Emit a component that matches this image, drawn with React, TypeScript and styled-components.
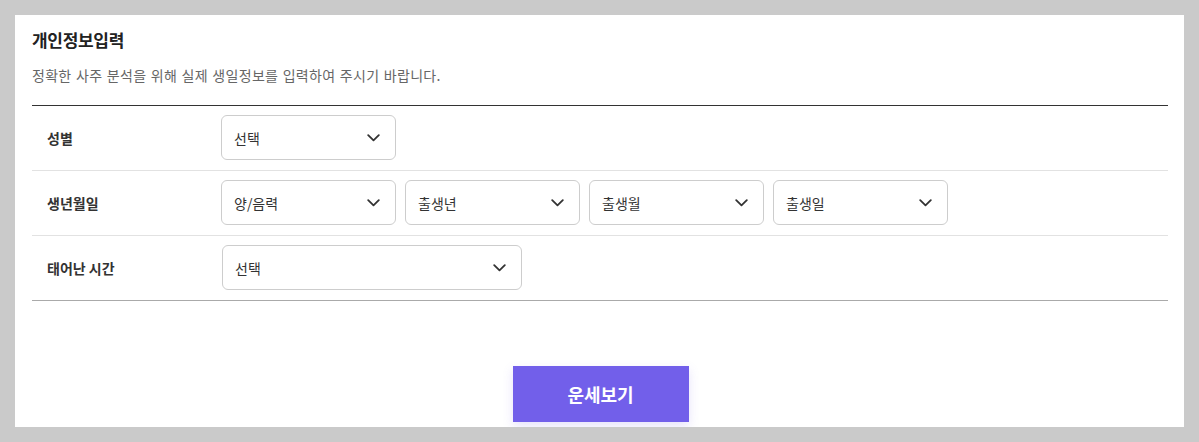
import React from 'react'
import styled, { createGlobalStyle } from 'styled-components'

const GlobalStyle = createGlobalStyle`
  html, body {
    margin: 0;
    padding: 0;
    background: #cacaca;
    font-family: "Noto Sans CJK KR", "Noto Sans", sans-serif;
  }
  * { box-sizing: border-box; }
`

type Field = { placeholder: string; wide?: boolean }
type Row = { label: string; fields: Field[] }

const rows: Row[] = [
  { label: '성별', fields: [{ placeholder: '선택' }] },
  {
    label: '생년월일',
    fields: [
      { placeholder: '양/음력' },
      { placeholder: '출생년' },
      { placeholder: '출생월' },
      { placeholder: '출생일' },
    ],
  },
  { label: '태어난 시간', fields: [{ placeholder: '선택', wide: true }] },
]

const Chevron = () => (
  <svg width="13" height="8" viewBox="0 0 13 8" fill="none">
    <path d="M1.2 1.2L6.5 6.4L11.8 1.2" stroke="#333" strokeWidth="1.8" strokeLinecap="round" strokeLinejoin="round" />
  </svg>
)

const App = () => (
  <>
    <GlobalStyle />
    <Card>
      <Title>개인정보입력</Title>
      <Desc>정확한 사주 분석을 위해 실제 생일정보를 입력하여 주시기 바랍니다.</Desc>
      <Table>
        {rows.map((row) => (
          <FormRow key={row.label}>
            <Label>{row.label}</Label>
            <Fields>
              {row.fields.map((f, i) => (
                <Select key={i} $wide={f.wide}>
                  <span>{f.placeholder}</span>
                  <Chevron />
                </Select>
              ))}
            </Fields>
          </FormRow>
        ))}
      </Table>
      <Actions>
        <SubmitBtn>운세보기</SubmitBtn>
      </Actions>
    </Card>
  </>
)

const Card = styled.div`
  margin: 15px;
  height: 412px;
  background: #fff;
  padding: 16px 16px 0 17px;
  overflow: hidden;
`

const Title = styled.h2`
  margin: 0;
  font-size: 17px;
  font-weight: 700;
  line-height: 1;
  color: #222;
  letter-spacing: -0.3px;
`

const Desc = styled.p`
  margin: 20px 0 0;
  font-size: 14px;
  line-height: 1;
  color: #666;
  letter-spacing: 0.3px;
  word-spacing: 1px;
  padding-bottom: 23px;
  border-bottom: 1px solid #333;
`

const Table = styled.div`
  border-bottom: 1px solid #aaa;
`

const FormRow = styled.div`
  display: grid;
  grid-template-columns: 189px 1fr;
  align-items: center;
  padding: 9px 0 10px;
  & + & {
    border-top: 1px solid #e2e2e2;
  }
`

const Label = styled.div`
  padding-left: 15px;
  font-size: 14px;
  font-weight: 700;
  color: #333;
`

const Fields = styled.div`
  display: flex;
  gap: 9px;
`

const Select = styled.div<{ $wide?: boolean }>`
  display: flex;
  align-items: center;
  justify-content: space-between;
  width: ${(p) => (p.$wide ? '300px' : '175px')};
  margin-left: ${(p) => (p.$wide ? '1px' : '0')};
  height: 45px;
  padding: 0 15px 0 12px;
  border: 1px solid #cdcdcd;
  border-radius: 6px;
  font-size: 14px;
  color: #333;
`

const Actions = styled.div`
  display: flex;
  justify-content: center;
  padding-top: 65px;
`

const SubmitBtn = styled.button`
  width: 176px;
  height: 56px;
  margin-left: 1px;
  border: 0;
  background: #725fea;
  color: #fff;
  font-family: inherit;
  font-size: 18px;
  font-weight: 700;
  box-shadow: 0 4px 10px rgba(114, 95, 234, 0.18);
  cursor: pointer;
`

export default App
